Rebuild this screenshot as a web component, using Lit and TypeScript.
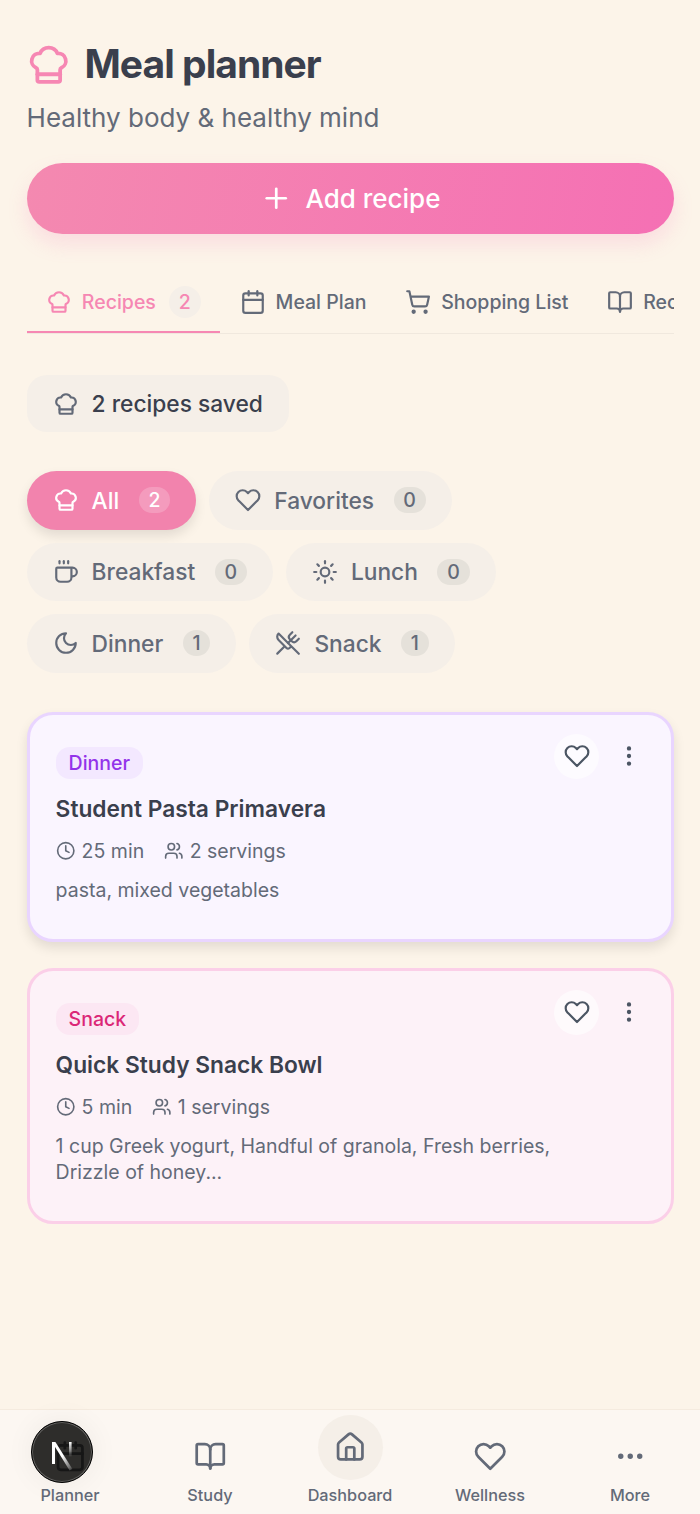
import { LitElement, html, css, svg } from 'lit';
import { customElement } from 'lit/decorators.js';

const paths = {
    chef: svg`<path d="M17 21a1 1 0 0 0 1-1v-5.35c0-.457.316-.844.727-1.041a4 4 0 0 0-2.134-7.589 5 5 0 0 0-9.186 0 4 4 0 0 0-2.134 7.588c.411.198.727.585.727 1.041V20a1 1 0 0 0 1 1Z"/><path d="M6 17h12"/>`,
    plus: svg`<path d="M5 12h14"/><path d="M12 5v14"/>`,
    calendar: svg`<path d="M8 2v4"/><path d="M16 2v4"/><rect width="18" height="18" x="3" y="4" rx="2"/><path d="M3 10h18"/>`,
    cart: svg`<circle cx="8" cy="21" r="1"/><circle cx="19" cy="21" r="1"/><path d="M2.05 2.05h2l2.66 12.42a2 2 0 0 0 2 1.58h9.78a2 2 0 0 0 1.95-1.57l1.65-7.43H5.12"/>`,
    book: svg`<path d="M12 7v14"/><path d="M3 18a1 1 0 0 1-1-1V4a1 1 0 0 1 1-1h5a4 4 0 0 1 4 4 4 4 0 0 1 4-4h5a1 1 0 0 1 1 1v13a1 1 0 0 1-1 1h-6a3 3 0 0 0-3 3 3 3 0 0 0-3-3z"/>`,
    heart: svg`<path d="M20.84 4.61a5.5 5.5 0 0 0-7.78 0L12 5.67l-1.06-1.06a5.5 5.5 0 0 0-7.78 7.78l1.06 1.06L12 21.23l7.78-7.78 1.06-1.06a5.5 5.5 0 0 0 0-7.78z"/>`,
    coffee: svg`<path d="M10 2v2"/><path d="M14 2v2"/><path d="M16 8a1 1 0 0 1 1 1v8a4 4 0 0 1-4 4H7a4 4 0 0 1-4-4V9a1 1 0 0 1 1-1h14a4 4 0 1 1 0 8h-1"/><path d="M6 2v2"/>`,
    sun: svg`<circle cx="12" cy="12" r="4"/><path d="M12 2v2"/><path d="M12 20v2"/><path d="m4.93 4.93 1.41 1.41"/><path d="m17.66 17.66 1.41 1.41"/><path d="M2 12h2"/><path d="M20 12h2"/><path d="m6.34 17.66-1.41 1.41"/><path d="m19.07 4.93-1.41 1.41"/>`,
    moon: svg`<path d="M12 3a6 6 0 0 0 9 9 9 9 0 1 1-9-9Z"/>`,
    utensils: svg`<path d="m16 2-2.3 2.3a3 3 0 0 0 0 4.2l1.8 1.8a3 3 0 0 0 4.2 0L22 8"/><path d="M15 15 3.3 3.3a4.2 4.2 0 0 0 0 6l7.3 7.3c.7.7 2 .7 2.8 0L15 15Zm0 0 7 7"/><path d="m2.1 21.8 6.4-6.3"/><path d="m19 5-7 7"/>`,
    clock: svg`<circle cx="12" cy="12" r="10"/><polyline points="12 6 12 12 16 14"/>`,
    users: svg`<path d="M16 21v-2a4 4 0 0 0-4-4H6a4 4 0 0 0-4 4v2"/><circle cx="9" cy="7" r="4"/><path d="M22 21v-2a4 4 0 0 0-3-3.87"/><path d="M16 3.13a4 4 0 0 1 0 7.75"/>`,
    dotsV: svg`<circle cx="12" cy="12" r="1"/><circle cx="12" cy="5" r="1"/><circle cx="12" cy="19" r="1"/>`,
    dotsH: svg`<circle cx="12" cy="12" r="1"/><circle cx="19" cy="12" r="1"/><circle cx="5" cy="12" r="1"/>`,
    home: svg`<path d="M15 21v-8a1 1 0 0 0-1-1h-4a1 1 0 0 0-1 1v8"/><path d="M3 10a2 2 0 0 1 .709-1.528l7-5.999a2 2 0 0 1 2.582 0l7 5.999A2 2 0 0 1 21 10v9a2 2 0 0 1-2 2H5a2 2 0 0 1-2-2z"/>`,
};

type IconName = keyof typeof paths;

const icon = (name: IconName, size: number) => html`<svg
    class="icon"
    style="width:${size}px;height:${size}px"
    viewBox="0 0 24 24"
    fill="none"
    stroke="currentColor"
    stroke-width="2"
    stroke-linecap="round"
    stroke-linejoin="round"
>${paths[name]}</svg>`;

const TABS: { name: string; icon: IconName; count?: number; active?: boolean }[] = [
    { name: 'Recipes', icon: 'chef', count: 2, active: true },
    { name: 'Meal Plan', icon: 'calendar' },
    { name: 'Shopping List', icon: 'cart' },
    { name: 'Recipe Book', icon: 'book' },
];

const CHIPS: { name: string; icon: IconName; count: number; active?: boolean }[] = [
    { name: 'All', icon: 'chef', count: 2, active: true },
    { name: 'Favorites', icon: 'heart', count: 0 },
    { name: 'Breakfast', icon: 'coffee', count: 0 },
    { name: 'Lunch', icon: 'sun', count: 0 },
    { name: 'Dinner', icon: 'moon', count: 1 },
    { name: 'Snack', icon: 'utensils', count: 1 },
];

const RECIPES = [
    {
        kind: 'dinner',
        tag: 'Dinner',
        title: 'Student Pasta Primavera',
        time: '25 min',
        servings: '2 servings',
        ingredients: 'pasta, mixed vegetables',
    },
    {
        kind: 'snack',
        tag: 'Snack',
        title: 'Quick Study Snack Bowl',
        time: '5 min',
        servings: '1 servings',
        ingredients: '1 cup Greek yogurt, Handful of granola, Fresh berries, Drizzle of honey...',
    },
];

const NAV: { name: string; icon: IconName; raised?: boolean; dev?: boolean }[] = [
    { name: 'Planner', icon: 'calendar', dev: true },
    { name: 'Study', icon: 'book' },
    { name: 'Dashboard', icon: 'home', raised: true },
    { name: 'Wellness', icon: 'heart' },
    { name: 'More', icon: 'dotsH' },
];

@customElement('app-root')
export class AppRoot extends LitElement {
    static styles = css`
:host {
    display: flex;
    flex-direction: column;
    min-height: 1514px;
    background: #fcf4e9;
    font-family: Inter, "Liberation Sans", sans-serif;
    color: #3a3f4d;
}

.icon {
    display: block;
    flex: none;
}

main {
    flex: 1;
    padding: 39px 26.2px 0 26.6px;
}

.title-row {
    display: flex;
    align-items: center;
    gap: 13px;
    height: 52px;
    margin-left: -0.6px;
}

.title-row .icon {
    color: #f687b3;
}

h1 {
    margin: 0 0 2px;
    font-size: 39px;
    line-height: 52px;
    font-weight: 700;
    letter-spacing: -0.975px;
    color: #3a3f4d;
}

.subtitle {
    margin: 7px 0 0;
    font-size: 26px;
    line-height: 39px;
    color: #636a78;
}

.add {
    display: flex;
    align-items: center;
    justify-content: center;
    gap: 13px;
    width: 100%;
    height: 71px;
    margin-top: 26px;
    border: none;
    border-radius: 36px;
    background: linear-gradient(100deg, #f489b0, #f570b4);
    box-shadow: 0 10px 20px rgba(244, 114, 182, 0.18);
    color: #fff;
    font: 500 26px Inter, sans-serif;
}

.tabs {
    display: flex;
    height: 63px;
    margin-top: 36px;
    border-bottom: 1.6px solid #f0e8de;
    overflow: hidden;
}

.tab {
    display: flex;
    align-items: center;
    flex: none;
    gap: 9.75px;
    padding: 2px 19.5px 0;
    font-size: 19.5px;
    font-weight: 500;
    color: #636a78;
    white-space: nowrap;
    border-bottom: 2px solid transparent;
}

.tab.active {
    color: #f687b3;
    border-bottom-color: #f687b3;
}

.tab-count {
    display: flex;
    align-items: center;
    justify-content: center;
    width: 32px;
    height: 32px;
    margin-left: 3.25px;
    border-radius: 50%;
    background: #f5efe8;
}

.saved {
    display: inline-flex;
    align-items: center;
    gap: 13px;
    height: 57px;
    margin-top: 41px;
    padding: 0 26px;
    border-radius: 20px;
    background: #f5efe8;
    font-size: 22.75px;
    font-weight: 500;
    color: #3a3f4d;
}

.saved .icon {
    color: #636a78;
}

.chips {
    display: flex;
    flex-wrap: wrap;
    gap: 13px;
    margin-top: 39px;
}

.chip {
    display: flex;
    align-items: center;
    height: 58.5px;
    padding: 0 26px;
    border-radius: 30px;
    background: #f5efe8;
    font-size: 22.75px;
    font-weight: 500;
    color: #636a78;
}

.chip .label {
    margin-left: 13px;
}

.chip .count {
    display: flex;
    align-items: center;
    justify-content: center;
    height: 26px;
    margin-left: 19.5px;
    padding: 0 9.75px;
    border-radius: 13px;
    background: #e5e1da;
    font-size: 19.5px;
}

.chip.active {
    background: #f283ad;
    color: #fff;
    box-shadow: 0 6px 12px rgba(0, 0, 0, 0.1);
}

.chip.active .count {
    background: rgba(255, 255, 255, 0.2);
}

.cards {
    display: flex;
    flex-direction: column;
    gap: 26px;
    margin-top: 39px;
}

.card {
    position: relative;
    padding: 32.5px 26px 36.4px;
    border: 3.25px solid;
    border-radius: 26px;
}

.card.dinner {
    background: #faf5ff;
    border-color: #e9d5ff;
    box-shadow: 0 6px 12px rgba(0, 0, 0, 0.1);
}

.card.snack {
    background: #fdf2f8;
    border-color: #fbcfe8;
}

.tag {
    display: inline-flex;
    align-items: center;
    height: 32px;
    padding: 0 13px;
    border-radius: 14px;
    font-size: 19.5px;
    font-weight: 500;
}

.dinner .tag {
    background: #f3e8ff;
    color: #9333ea;
}

.snack .tag {
    background: #fce7f3;
    color: #db2777;
}

.actions {
    position: absolute;
    top: 19px;
    right: 19.5px;
    display: flex;
    align-items: center;
    gap: 7px;
}

.fav {
    display: flex;
    align-items: center;
    justify-content: center;
    width: 45px;
    height: 45px;
    border-radius: 50%;
    background: rgba(255, 255, 255, 0.6);
    color: #4b5563;
}

.kebab {
    display: flex;
    align-items: center;
    justify-content: center;
    width: 45px;
    height: 45px;
    color: #4b5563;
}

h3 {
    margin: 13.5px 0 0;
    font-size: 22.75px;
    line-height: 32px;
    font-weight: 600;
    color: #3a3f4d;
}

.meta {
    display: flex;
    gap: 19.5px;
    margin-top: 13px;
    font-size: 19.5px;
    line-height: 26px;
    color: #636a78;
}

.meta span {
    display: flex;
    align-items: center;
    gap: 6.5px;
}

.ingredients {
    margin: 13px 0 0;
    padding-right: 90px;
    font-size: 19.5px;
    line-height: 26px;
    color: #636a78;
}

nav {
    display: grid;
    grid-template-columns: repeat(5, 1fr);
    height: 105px;
    box-sizing: border-box;
    border-top: 1.6px solid #f5ebdf;
    background: #fcf7f2;
}

.nav-item {
    position: relative;
    display: flex;
    flex-direction: column;
    align-items: center;
    padding-top: 13.5px;
    font-size: 16.25px;
    font-weight: 500;
    color: #636a78;
}

.nav-icon {
    position: relative;
    display: flex;
    align-items: center;
    justify-content: center;
    width: 65px;
    height: 65px;
    margin-bottom: -3.5px;
    border-radius: 50%;
}

.nav-item.raised .nav-icon {
    margin-top: -8.5px;
    margin-bottom: 5px;
    background: #f5efe8;
}

.nav-item.dev .nav-icon {
    color: #161616;
}

.dev-badge {
    position: absolute;
    left: 31px;
    top: 11px;
    width: 62px;
    height: 62px;
    box-sizing: border-box;
    border: 1.5px solid #000;
    border-radius: 50%;
    background: #2e2d2b;
    box-shadow: 0 0 0 1px rgba(255, 255, 255, 0.25) inset, 0 0 30px rgba(0, 0, 0, 0.06);
}

.dev-logo {
    position: absolute;
    left: 31px;
    top: 11px;
    display: block;
}
`;

    render() {
        return html`
<main>
    <div class="title-row">
        ${icon('chef', 45.5)}
        <h1>Meal planner</h1>
    </div>
    <p class="subtitle">Healthy body &amp; healthy mind</p>
    <button class="add">${icon('plus', 32.5)}Add recipe</button>

    <div class="tabs">
        ${TABS.map((t) => html`
            <div class="tab ${t.active ? 'active' : ''}">
                ${icon(t.icon, 26)}
                ${t.name}
                ${t.count !== undefined ? html`<span class="tab-count">${t.count}</span>` : null}
            </div>
        `)}
    </div>

    <div class="saved">${icon('chef', 26)}2 recipes saved</div>

    <div class="chips">
        ${CHIPS.map((c) => html`
            <div class="chip ${c.active ? 'active' : ''}">
                ${icon(c.icon, 26)}
                <span class="label">${c.name}</span>
                <span class="count">${c.count}</span>
            </div>
        `)}
    </div>

    <div class="cards">
        ${RECIPES.map((r) => html`
            <article class="card ${r.kind}">
                <span class="tag">${r.tag}</span>
                <div class="actions">
                    <span class="fav">${icon('heart', 26)}</span>
                    <span class="kebab">${icon('dotsV', 26)}</span>
                </div>
                <h3>${r.title}</h3>
                <div class="meta">
                    <span>${icon('clock', 19.5)}${r.time}</span>
                    <span>${icon('users', 19.5)}${r.servings}</span>
                </div>
                <p class="ingredients">${r.ingredients}</p>
            </article>
        `)}
    </div>
</main>

<nav>
    ${NAV.map((n) => html`
        <div class="nav-item ${n.raised ? 'raised' : ''} ${n.dev ? 'dev' : ''}">
            ${n.dev ? html`<div class="dev-badge"></div>` : null}
            <div class="nav-icon">${icon(n.icon, 32.5)}</div>
            ${n.name}
            ${n.dev ? html`<svg class="dev-logo" width="62" height="62" viewBox="0 0 62 62">
                <defs>
                    <linearGradient id="n-fade" x1="0" y1="0" x2="1" y2="1">
                        <stop offset="0.5" stop-color="#fff" />
                        <stop offset="1" stop-color="#fff" stop-opacity="0.1" />
                    </linearGradient>
                    <linearGradient id="n-fade-2" x1="0" y1="0" x2="0" y2="1">
                        <stop offset="0" stop-color="#fff" />
                        <stop offset="1" stop-color="#fff" stop-opacity="0" />
                    </linearGradient>
                </defs>
                <path d="M21 21h3v22h-3z" fill="#fff" />
                <path d="M21 21h3.4l17 27-2.8 1.4z" fill="url(#n-fade)" />
                <path d="M38 21h2.6v15H38z" fill="url(#n-fade-2)" />
            </svg>` : null}
        </div>
    `)}
</nav>
`;
    }
}
